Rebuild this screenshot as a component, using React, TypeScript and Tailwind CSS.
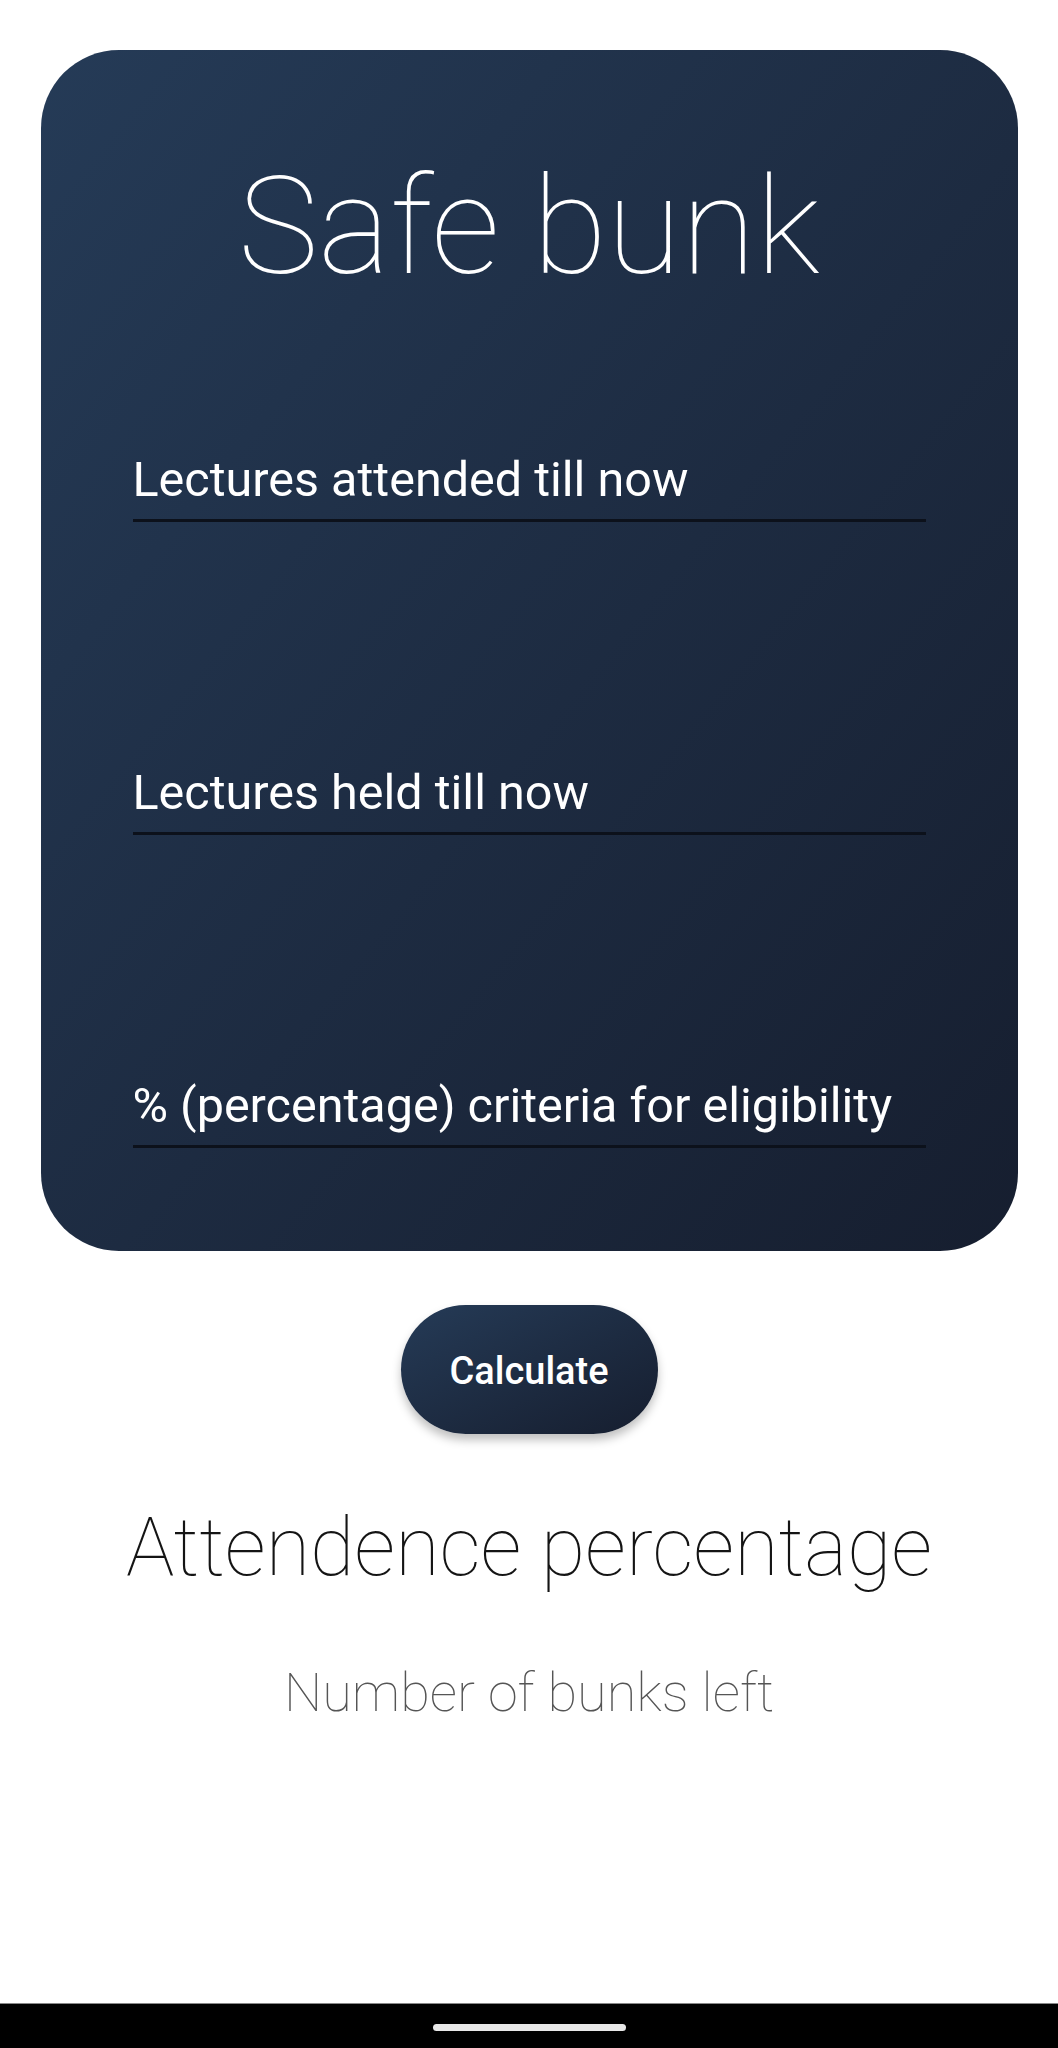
export default function App() {
  const fields = [
    "Lectures attended till now",
    "Lectures held till now",
    "% (percentage) criteria for eligibility",
  ];

  return (
    <div className="h-[2048px] flex flex-col bg-white font-['Roboto',sans-serif]">
      <main className="flex flex-col items-center">
        {/* Input card */}
        <section className="mt-[50px] w-[977px] h-[1201px] rounded-[78px] bg-gradient-to-br from-[#253b57] to-[#161e2f] pt-[109px] px-[92px]">
          <h1 className="text-center text-white text-[136px] leading-none font-thin">
            Safe bunk
          </h1>
          <div className="mt-[161px] flex flex-col gap-[247px]">
            {fields.map((f) => (
              <input
                key={f}
                type="number"
                placeholder={f}
                className="block w-full bg-transparent text-white text-[48.5px] leading-none h-[66px] pb-[17px] border-b-[3px] border-[#0c111b] outline-none placeholder:text-white"
              />
            ))}
          </div>
        </section>

        <button className="mt-[54px] w-[257px] h-[129px] rounded-full bg-gradient-to-br from-[#253b57] to-[#161e2f] text-white text-[38px] font-medium pt-[4px] shadow-[0_6px_10px_rgba(0,0,0,0.25)]">
          Calculate
        </button>

        <p className="mt-[73px] text-[81px] leading-none font-thin text-[#141414]">
          Attendence percentage
        </p>
        <p className="mt-[78px] text-[54px] leading-none font-thin text-[#555555]">
          Number of bunks left
        </p>
      </main>

      {/* System nav bar */}
      <div className="mt-auto h-[45px] bg-black border-t border-[#888] flex justify-center">
        <div className="mt-[20px] w-[193px] h-[7px] rounded-full bg-[#e8e8e8]" />
      </div>
    </div>
  );
}
